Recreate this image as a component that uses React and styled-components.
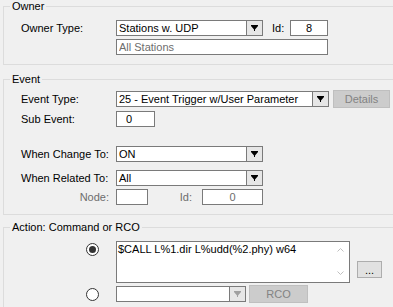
import React from 'react'
import styled, { createGlobalStyle } from 'styled-components'

const GlobalStyle = createGlobalStyle`
  html, body {
    margin: 0;
    padding: 0;
    background: #f0f0f0;
    overflow: hidden;
  }
  body {
    font-family: "Liberation Sans", Arial, sans-serif;
    font-size: 11px;
    color: #000;
  }
`

const Page = styled.div`
  padding-left: 3px;
`

// group box: the right edge runs out of the window, so no right border
const Group = styled.fieldset`
  margin: 0 0 ${p => p.$mb || 0}px 0;
  padding: 0;
  border: 1px solid #dcdcdc;
  border-right: none;
  min-width: 0;
`

const Legend = styled.legend`
  margin-left: 6px;
  padding: 0 2px;
  line-height: 13px;
  font-weight: normal;
`

const Body = styled.div`
  padding: ${p => p.$pt}px 0 ${p => p.$pb}px 17px;
`

const Row = styled.div`
  display: flex;
  align-items: ${p => p.$top ? 'flex-start' : 'center'};
  height: ${p => p.$h || 16}px;
  margin-top: ${p => p.$mt || 0}px;
`

const Label = styled.span`
  box-sizing: border-box;
  flex: none;
  width: ${p => p.$w || 95}px;
  color: ${p => p.$dim ? '#6d6d6d' : '#000'};
  text-align: ${p => p.$right ? 'right' : 'left'};
  padding-left: ${p => p.$pl || 0}px;
  padding-right: ${p => p.$pr || 0}px;
  line-height: 13px;
`

const Field = styled.input`
  box-sizing: border-box;
  flex: none;
  width: ${p => p.$w}px;
  height: 16px;
  margin: 0;
  border: 1px solid #7a7a7a;
  background: #fff;
  padding: 0 ${p => p.$pad ?? 2}px;
  font: inherit;
  color: ${p => p.$dim ? '#6d6d6d' : '#000'};
  text-align: ${p => p.$center ? 'center' : 'left'};
  outline: none;
  &::placeholder {
    color: #6d6d6d;
  }
`

const Combo = styled.div`
  box-sizing: border-box;
  flex: none;
  display: flex;
  width: ${p => p.$w}px;
  height: 16px;
  border: 1px solid #7a7a7a;
  background: #fff;
`

const ComboText = styled.span`
  flex: 1;
  padding-left: 2px;
  line-height: 14px;
  white-space: nowrap;
  overflow: hidden;
`

const ArrowBox = styled.span`
  flex: none;
  width: 15px;
  border-left: 1px solid #7a7a7a;
  background: #e6e6e6;
  display: flex;
  align-items: center;
  justify-content: center;
`

const Button = styled.button`
  box-sizing: border-box;
  flex: none;
  width: ${p => p.$w}px;
  height: ${p => p.$h || 18}px;
  margin: ${p => p.$mt || 0}px 0 0 ${p => p.$ml || 0}px;
  padding: 0;
  font: inherit;
  border: 1px solid ${p => p.disabled ? '#bfbfbf' : '#adadad'};
  background: ${p => p.disabled ? '#cccccc' : '#e1e1e1'};
  color: ${p => p.disabled ? '#838383' : '#000'};
`

const RadioCell = styled.span`
  box-sizing: border-box;
  flex: none;
  width: 95px;
  display: flex;
  justify-content: flex-end;
  padding-right: 17px;
  padding-top: ${p => p.$pt || 0}px;
`

const Radio = styled.span`
  box-sizing: border-box;
  width: 13px;
  height: 13px;
  border-radius: 50%;
  border: 1px solid #333;
  background: #fff;
  display: flex;
  align-items: center;
  justify-content: center;
  &::after {
    content: '';
    display: ${p => p.$on ? 'block' : 'none'};
    width: 7px;
    height: 7px;
    border-radius: 50%;
    background: #333;
  }
`

const Memo = styled.div`
  box-sizing: border-box;
  flex: none;
  display: flex;
  width: 234px;
  height: 42px;
  border: 1px solid #7a7a7a;
  background: #fff;
`

const MemoText = styled.textarea`
  flex: 1;
  margin: 0;
  border: none;
  padding: 0 1px;
  font: inherit;
  line-height: 14px;
  resize: none;
  overflow: hidden;
  outline: none;
  background: transparent;
`

const Scroll = styled.span`
  flex: none;
  width: 17px;
  display: flex;
  flex-direction: column;
  justify-content: space-between;
  align-items: center;
  padding: 6px 0 7px;
  box-sizing: border-box;
`

const Arrow = ({ dim }) => (
  <svg width="7" height="6" viewBox="0 0 7 6">
    <path d="M0 0H7V1L4 4.5V6H3V4.5L0 1Z" fill={dim ? '#a0a0a0' : '#000'} />
  </svg>
)

const Chevron = ({ up }) => (
  <svg width="7" height="4" viewBox="0 0 7 4">
    <polyline
      points={up ? '0.5,3.5 3.5,0.5 6.5,3.5' : '0.5,0.5 3.5,3.5 6.5,0.5'}
      fill="none"
      stroke="#c0c0c0"
    />
  </svg>
)

const Select = ({ w, value, dim }) => (
  <Combo $w={w}>
    <ComboText>{value}</ComboText>
    <ArrowBox><Arrow dim={dim} /></ArrowBox>
  </Combo>
)

export default function App() {
  return (
    <Page>
      <GlobalStyle />

      <Group $mb={8}>
        <Legend>Owner</Legend>
        <Body $pt={7} $pb={9}>
          <Row>
            <Label>Owner Type:</Label>
            <Select w={147} value="Stations w. UDP" />
            <Label $w={27} $pl={9}>Id:</Label>
            <Field $w={38} $center readOnly value="8" />
          </Row>
          <Row $mt={3}>
            <Label />
            <Field $w={212} readOnly placeholder="All Stations" />
          </Row>
        </Body>
      </Group>

      <Group $mb={6}>
        <Legend>Event</Legend>
        <Body $pt={4} $pb={9}>
          <Row $h={18}>
            <Label>Event Type:</Label>
            <Select w={213} value="25 - Event Trigger w/User Parameter" />
            <Button $w={57} $ml={4} disabled>Details</Button>
          </Row>
          <Row $mt={3}>
            <Label>Sub Event:</Label>
            <Field $w={39} $pad={9} readOnly value="0" />
          </Row>
          <Row $mt={19}>
            <Label>When Change To:</Label>
            <Select w={147} value="ON" />
          </Row>
          <Row $mt={8}>
            <Label>When Related To:</Label>
            <Select w={147} value="All" />
          </Row>
          <Row $mt={3}>
            <Label $right $pr={7} $dim>Node:</Label>
            <Field $w={32} readOnly value="" />
            <Label $w={54} $right $pr={10} $dim>Id:</Label>
            <Field $w={61} $center $dim readOnly value="0" />
          </Row>
        </Body>
      </Group>

      <Group>
        <Legend>Action: Command or RCO</Legend>
        <Body $pt={7} $pb={10}>
          <Row $h={42} $top>
            <RadioCell $pt={2}><Radio $on /></RadioCell>
            <Memo>
              <MemoText readOnly value="$CALL L%1.dir L%udd(%2.phy) w64" />
              <Scroll>
                <Chevron up />
                <Chevron />
              </Scroll>
            </Memo>
            <Button $w={25} $h={17} $ml={7} $mt={20}>...</Button>
          </Row>
          <Row $h={18} $mt={2}>
            <RadioCell><Radio /></RadioCell>
            <Select w={130} value="" dim />
            <Button $w={59} $ml={3} disabled>RCO</Button>
          </Row>
        </Body>
      </Group>
    </Page>
  )
}
